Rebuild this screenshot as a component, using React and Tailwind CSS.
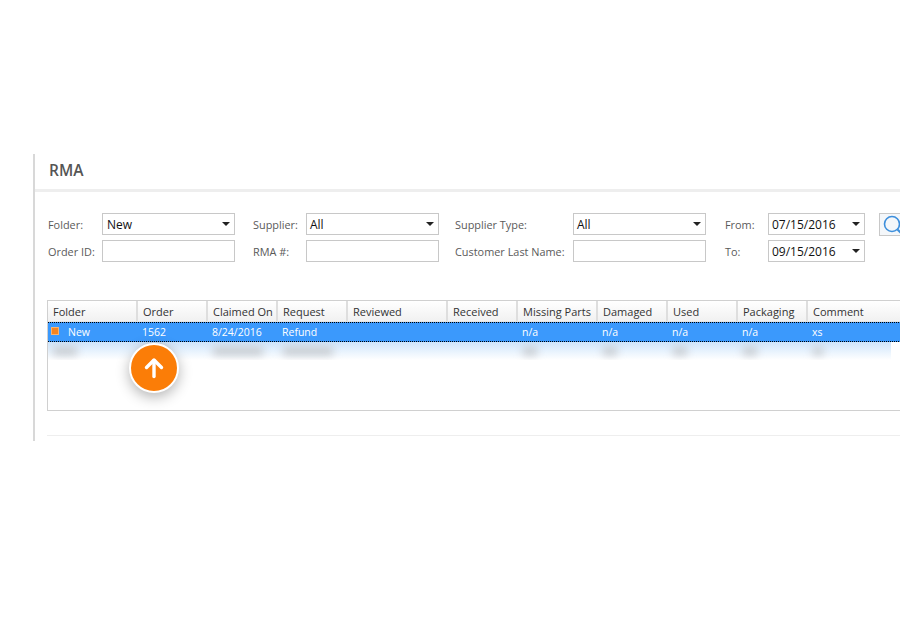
import React from 'react';

const columns = [
  { label: 'Folder', width: 'w-[90px]', value: 'New', blur: 'w-[24px]' },
  { label: 'Order', width: 'w-[70px]', value: '1562', blur: 'w-[24px]' },
  { label: 'Claimed On', width: 'w-[70px]', value: '8/24/2016', blur: 'w-[50px]' },
  { label: 'Request', width: 'w-[70px]', value: 'Refund', blur: 'w-[50px]' },
  { label: 'Reviewed', width: 'w-[100px]', value: '', blur: '' },
  { label: 'Received', width: 'w-[70px]', value: '', blur: '' },
  { label: 'Missing Parts', width: 'w-[80px]', value: 'n/a', blur: 'w-[14px]' },
  { label: 'Damaged', width: 'w-[70px]', value: 'n/a', blur: 'w-[14px]' },
  { label: 'Used', width: 'w-[70px]', value: 'n/a', blur: 'w-[14px]' },
  { label: 'Packaging', width: 'w-[70px]', value: 'n/a', blur: 'w-[14px]' },
  { label: 'Comment', width: 'w-[95px]', value: 'xs', blur: 'w-[10px]' },
];

const Caret = () => (
  <span className="absolute right-[4px] top-[8px] w-0 h-0 border-x-[4px] border-x-transparent border-t-[4px] border-t-[#222]" />
);

const Field = ({ value, select, inset = 'pl-[3px]' }) => (
  <div className={`relative h-[22px] border border-[#c8c8c8] bg-white ${inset} text-[12px] leading-[22px] text-[#111]`}>
    {value}
    {select && <Caret />}
  </div>
);

const Label = ({ children, indent = '' }) => (
  <div className={`${indent} h-[22px] pt-[1px] text-[10.9px] leading-[22px] whitespace-nowrap text-[#5a5a5a]`}>{children}</div>
);

export default function App() {
  return (
    <div className="w-[900px] h-[620px] overflow-hidden bg-white pt-[154px] pl-[33px] font-['Open_Sans',sans-serif]">
      <div className="relative w-[867px] h-[287px] border-l-2 border-[#d8d8d8]">
        <div className="h-[38px] pl-[14px] border-b-[3px] border-[#eeeeee] text-[15.5px] leading-[32px] font-semibold text-[#555555]">
          RMA
        </div>

        <div className="grid grid-cols-[54px_133px_71px_133px_134px_133px_62px_97px_54px] gap-y-[5px] pt-[21px] pl-[13px] w-[900px]">
          <Label>Folder:</Label>
          <Field value="New" select inset="pl-[4px]" />
          <Label indent="ml-[18px]">Supplier:</Label>
          <Field value="All" select />
          <Label indent="ml-[16px]">Supplier Type:</Label>
          <Field value="All" select />
          <Label indent="ml-[19px]">From:</Label>
          <Field value="07/15/2016" select />
          <div className="ml-[14px] h-[23px] -mb-[1px] w-[30px] border border-[#c8c8c8] bg-[#f4f7fa] pl-[3px] pt-[1px]">
            <svg width="24" height="20" viewBox="0 0 24 20" fill="none" stroke="#3d8fdc" strokeWidth="1.6">
              <circle cx="9" cy="9" r="7.5" />
              <path d="M14.5 14.5 L20 20" strokeWidth="2" />
            </svg>
          </div>

          <Label>Order ID:</Label>
          <Field />
          <Label indent="ml-[18px]">RMA #:</Label>
          <Field />
          <Label indent="ml-[16px]">Customer Last Name:</Label>
          <Field />
          <Label indent="ml-[19px]">To:</Label>
          <Field value="09/15/2016" select />
        </div>

        <div className="relative mt-[38px] ml-[12px] w-[900px] h-[111px] border border-[#d0d0d0] border-r-0 bg-white">
          <div className="flex h-[21px] border-b border-[#e4e4e4]">
            {columns.map((col) => (
              <div
                key={col.label}
                className={`${col.width} shrink-0 h-[20px] pl-[5px] border-r-2 border-[#dedede] bg-gradient-to-b from-white to-[#f1f1f1] text-[11px] leading-[21px] text-[#333333] whitespace-nowrap`}
              >
                {col.label}
              </div>
            ))}
          </div>

          <div className="flex h-[20px] bg-[#3b99fc] border-y border-dotted border-black text-[10.5px] leading-[18px] text-white">
            {columns.map((col, i) => (
              <div key={col.label} className={`${col.width} shrink-0 pl-[4px] whitespace-nowrap`}>
                {i === 0 ? (
                  <span className="flex items-center">
                    <span className="w-[6px] h-[6px] shrink-0 mr-[10px] -mt-[2px] bg-[#f5841f] ring-1 ring-[#f9b36e]" />
                    {col.value}
                  </span>
                ) : (
                  col.value
                )}
              </div>
            ))}
          </div>

          <div className="w-[843px] h-[18px] bg-gradient-to-b from-[#cfe5fb] to-white overflow-hidden">
            <div className="flex pt-[5px]">
              {columns.map((col) => (
                <div key={col.label} className={`${col.width} shrink-0 pl-[5px]`}>
                  {col.blur && <div className={`${col.blur} h-[8px] bg-[#c4c7cb] blur-[4px]`} />}
                </div>
              ))}
            </div>
          </div>

          <div className="absolute left-[81px] top-[42px] w-[50px] h-[50px] rounded-full bg-[#fb7d07] border-2 border-white shadow-[0_4px_14px_rgba(0,0,0,0.3)] flex items-center justify-center">
            <svg width="24" height="24" viewBox="0 0 24 24" fill="none" stroke="white" strokeWidth="3.4" strokeLinecap="round" strokeLinejoin="round">
              <path d="M12 20.5 V4.5" />
              <path d="M4.5 11.5 L12 4 L19.5 11.5" />
            </svg>
          </div>
        </div>

        <div className="mt-[24px] ml-[12px] w-[900px] border-t border-[#eeeeee]" />
      </div>
    </div>
  );
}
